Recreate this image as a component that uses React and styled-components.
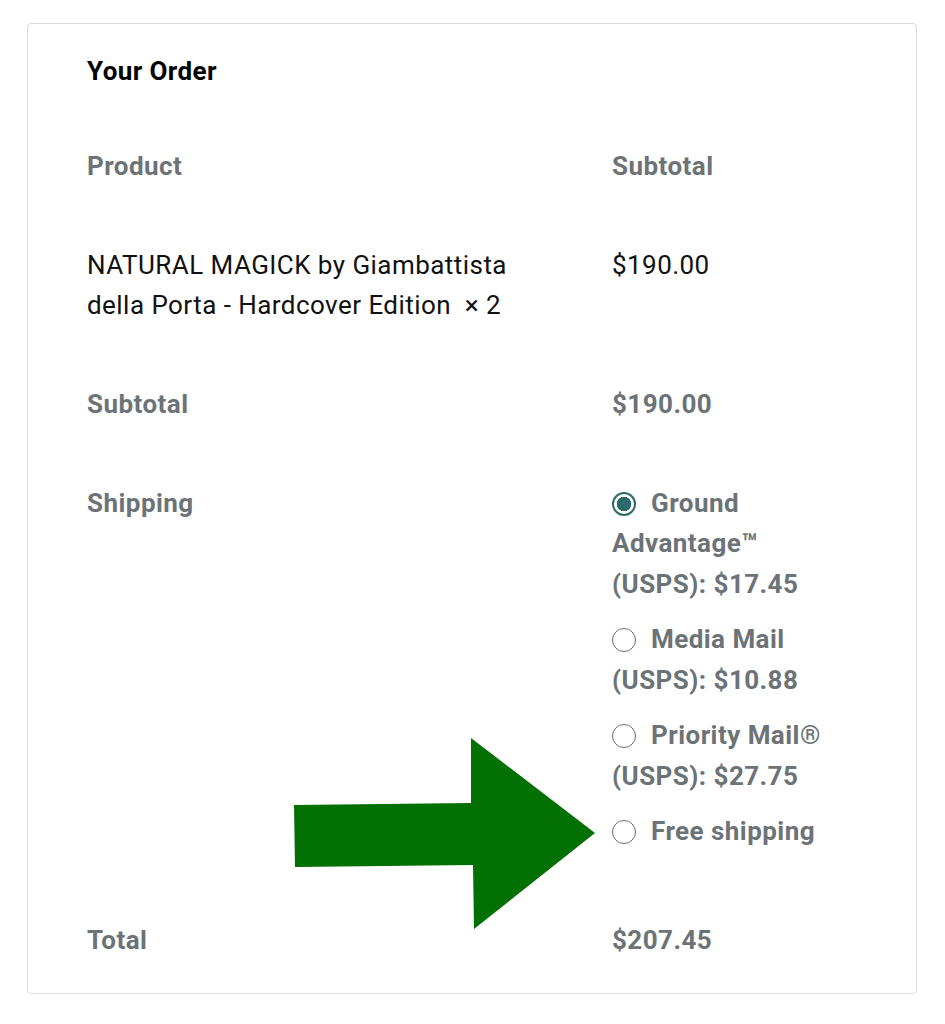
import React from 'react'
import styled, { createGlobalStyle } from 'styled-components'

const GlobalStyle = createGlobalStyle`
  html, body {
    margin: 0;
    padding: 0;
    background: #fff;
  }
  body {
    font-family: Roboto, 'Liberation Sans', Arial, sans-serif;
    color: #111;
  }
`

const shipping = [
  { id: 'ground', label: 'Ground Advantage™ (USPS): $17.45', checked: true },
  { id: 'media', label: 'Media Mail (USPS): $10.88' },
  { id: 'priority', label: 'Priority Mail® (USPS): $27.75' },
  { id: 'free', label: 'Free shipping' },
]

const App = () => {
  return (
    <>
      <GlobalStyle />
      <Page>
        <Card>
          <Heading>Your Order</Heading>
          <Table>
            <colgroup>
              <col style={{ width: '525px' }} />
              <col />
            </colgroup>
            <thead>
              <tr>
                <Label>Product</Label>
                <Label>Subtotal</Label>
              </tr>
            </thead>
            <tbody>
              <tr>
                <Cell>
                  NATURAL MAGICK by Giambattista della Porta - Hardcover
                  Edition&nbsp; ×&nbsp;2
                </Cell>
                <Cell>$190.00</Cell>
              </tr>
            </tbody>
            <tfoot>
              <tr>
                <Label>Subtotal</Label>
                <Label>$190.00</Label>
              </tr>
              <tr>
                <Label>Shipping</Label>
                <Label>
                  <Methods>
                    {shipping.map((m) => (
                      <Method key={m.id}>
                        <Radio $checked={m.checked} />
                        {m.label}
                      </Method>
                    ))}
                  </Methods>
                </Label>
              </tr>
              <tr>
                <Label>Total</Label>
                <Label>$207.45</Label>
              </tr>
            </tfoot>
          </Table>
        </Card>
        <Arrow viewBox='0 0 302 192' width='302' height='192'>
          <polygon
            points='0,67 177,65 177,0 301,95 180,191 179,127 1,129'
            fill='#037003'
          />
        </Arrow>
      </Page>
    </>
  )
}

export default App

const Page = styled.div`
  position: relative;
  width: 945px;
  height: 1024px;
  padding: 23px 0 0 27px;
  box-sizing: border-box;
`

const Card = styled.div`
  width: 890px;
  height: 971px;
  box-sizing: border-box;
  border: 1px solid #dcdcdc;
  border-radius: 4px;
  padding: 27px 59px 0 59px;
`

const Heading = styled.h3`
  margin: 0 0 25px;
  font-size: 26px;
  line-height: 40px;
  font-weight: 700;
  letter-spacing: 0.4px;
  color: #000;
`

const Table = styled.table`
  width: 770px;
  table-layout: fixed;
  border-collapse: collapse;
  font-size: 26px;
  line-height: 40px;
  letter-spacing: 0.45px;

  th,
  td {
    padding: 29.5px 10px 29.5px 0;
    text-align: left;
    vertical-align: top;
  }
  th:first-child,
  td:first-child {
    padding-right: 80px;
  }
`

const Label = styled.th`
  font-weight: 700;
  color: #6c7377;
`

const Cell = styled.td`
  font-weight: 400;
  color: #111;
`

const Methods = styled.ul`
  list-style: none;
  margin: 0;
  padding: 0;
  line-height: 40.5px;
`

const Method = styled.li`
  margin-bottom: 15px;

  &:last-child {
    margin-bottom: 9px;
  }
`

const Radio = styled.span`
  display: inline-block;
  box-sizing: border-box;
  width: 24px;
  height: 24px;
  margin-right: 15px;
  vertical-align: -4px;
  border-radius: 50%;
  border-style: solid;
  border-color: ${({ $checked }) => ($checked ? '#2b6c6a' : '#6f6f6f')};
  border-width: ${({ $checked }) => ($checked ? '2px' : '1.5px')};
  background: ${({ $checked }) =>
    $checked ? 'radial-gradient(circle, #2b6c6a 0 7px, #fff 7.5px)' : '#fff'};
`

const Arrow = styled.svg`
  position: absolute;
  left: 294px;
  top: 738px;
`
